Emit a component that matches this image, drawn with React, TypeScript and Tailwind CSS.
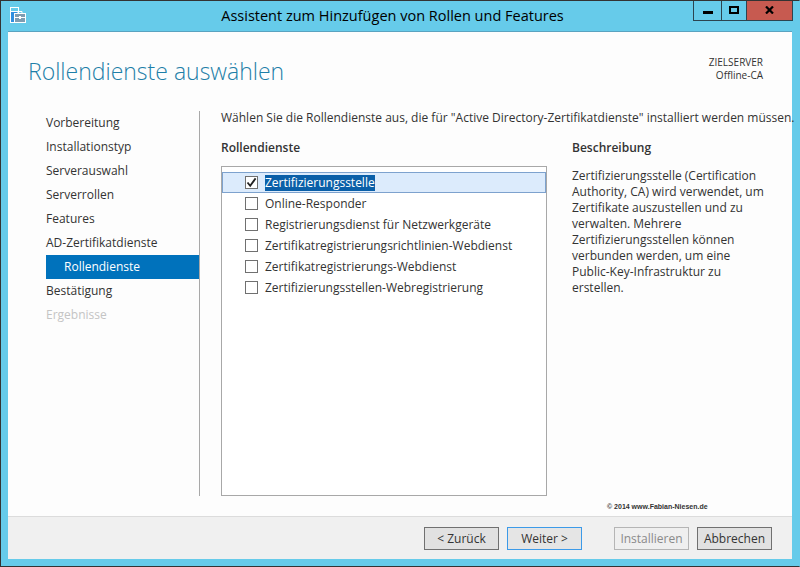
const F = "[font-family:'Open_Sans','Noto_Sans',sans-serif]";

function Box({ checked = false }: { checked?: boolean }) {
  return (
    <span className="flex h-[13px] w-[13px] shrink-0 items-center justify-center border border-[#707070] bg-white">
      {checked && (
        <svg width="11" height="11" viewBox="0 0 11 11">
          <path d="M1.5 5.5 L4.2 8.8 L9.6 1.4" fill="none" stroke="#222" strokeWidth="1.8" />
        </svg>
      )}
    </span>
  );
}

function WinIcon() {
  return (
    <svg width="16" height="16" viewBox="0 0 16 16">
      <rect x="0.5" y="0.5" width="8" height="15" fill="#2f8fe0" stroke="#fff" />
      <rect x="1" y="1" width="7" height="3" fill="#66cbea" />
      <rect x="1" y="4" width="7" height="1" fill="#fff" />
      <rect x="4.5" y="6.5" width="11" height="9" fill="#7e9db2" stroke="#fff" />
      <path d="M8 6.5 V4.5 H12 V6.5" fill="none" stroke="#fff" />
      <rect x="5" y="10" width="10" height="1" fill="#fff" />
      <rect x="9" y="9" width="2" height="3" fill="#fff" />
    </svg>
  );
}

const steps = ["Vorbereitung", "Installationstyp", "Serverauswahl", "Serverrollen", "Features", "AD-Zertifikatdienste"];
const rows = [
  "Online-Responder",
  "Registrierungsdienst für Netzwerkgeräte",
  "Zertifikatregistrierungsrichtlinien-Webdienst",
  "Zertifikatregistrierungs-Webdienst",
  "Zertifizierungsstellen-Webregistrierung",
];

function Btn({ label, cls }: { label: string; cls: string }) {
  return (
    <div className={`flex h-[23px] w-[75px] items-center justify-center border text-[12px] ${cls}`}>{label}</div>
  );
}

export default function App() {
  return (
    <div className={`flex h-[567px] w-[800px] flex-col overflow-hidden border-[1px] border-b-[#333] border-l-[#333] border-r-[#66cbea] border-t-[#333] bg-[#66cbea] text-[12px] leading-[16px] text-[#333] ${F}`}>
      <div className="flex h-[30px] shrink-0 items-start">
        <div className="ml-[9px] mt-[6px]"><WinIcon /></div>
        <div className="flex h-[30px] flex-1 items-center justify-center pl-[66px] font-['Open_Sans'] text-[14.5px] text-black">
          Assistent zum Hinzufügen von Rollen und Features
        </div>
        <div className="mr-[6px] flex h-[21px] -mt-px border-x border-b border-[#2c4450]">
          <div className="flex w-[28px] items-center justify-center border-r border-[#2c4450]"><span className="mt-[5px] h-[3px] w-[10px] bg-black" /></div>
          <div className="flex w-[25px] items-center justify-center border-r border-[#2c4450]"><span className="mb-[1px] h-[8px] w-[10px] border-2 border-black" /></div>
          <div className="flex w-[45px] items-center justify-center bg-[#c75a50]">
            <svg width="9" height="8" viewBox="0 0 9 8"><path d="M1 0.5 L8 7.5 M8 0.5 L1 7.5" stroke="#000" strokeWidth="2.2" /></svg>
          </div>
        </div>
      </div>

      <div className="mx-[7px] mb-[7px] flex min-h-0 flex-1 flex-col border-t border-[#5aa3c0] bg-[#fdfdfd]">
        <div className="flex h-[79px] shrink-0 items-start justify-between pl-[20px] pr-[29px]">
          <div className="mt-[21px] text-[23px] font-light leading-[36px] text-[#1e7fa8]">Rollendienste auswählen</div>
          <div className="mt-[24px] text-right text-[10px] leading-[13px]">
            <div>ZIELSERVER</div>
            <div>Offline-CA</div>
          </div>
        </div>

        <div className="flex min-h-0 flex-1">
          <div className="ml-[38px] h-[385px] w-[154px] border-r border-[#a8a8a8]">
            {steps.map((s) => (
              <div key={s} className="flex h-[24px] w-[153px] items-center">{s}</div>
            ))}
            <div className="flex h-[24px] w-[153px] items-center bg-[#0072bc] pl-[18px] text-white">Rollendienste</div>
            <div className="flex h-[24px] w-[153px] items-center">Bestätigung</div>
            <div className="flex h-[24px] w-[153px] items-center text-[#c4c4c4]">Ergebnisse</div>
          </div>

          <div className="ml-[21px] flex flex-1 flex-col">
            <div className="mt-[-1px] h-[16px] whitespace-nowrap">Wählen Sie die Rollendienste aus, die für "Active Directory-Zertifikatdienste" installiert werden müssen.</div>
            <div className="mt-[14px] flex">
              <div className="w-[326px]">
                <div className="h-[16px] font-semibold">Rollendienste</div>
                <div className="mt-[10px] h-[330px] border border-[#a8a8a8] bg-white pt-[5px]">
                  <div className="flex h-[21px] items-center border border-[#7da2ce] bg-[#dcebfc] pl-[22px]">
                    <Box checked />
                    <span className="ml-[7px] bg-[#0a5fa8] text-white">Zertifizierungsstelle</span>
                  </div>
                  {rows.map((r) => (
                    <div key={r} className="flex h-[21px] items-center pl-[23px]">
                      <Box />
                      <span className="ml-[7px]">{r}</span>
                    </div>
                  ))}
                </div>
              </div>
              <div className="ml-[25px] w-[195px]">
                <div className="h-[16px] font-semibold">Beschreibung</div>
                <p className="mt-[12px]">
                  Zertifizierungsstelle (Certification Authority, CA) wird verwendet, um Zertifikate auszustellen und zu verwalten. Mehrere Zertifizierungsstellen können verbunden werden, um eine Public-Key-Infrastruktur zu erstellen.
                </p>
              </div>
            </div>
            <div className="mt-[6px] ml-[386px] font-['Liberation_Sans'] text-[7px] font-bold leading-[10px] whitespace-nowrap">© 2014 www.Fabian-Niesen.de</div>
          </div>
        </div>

        <div className="flex h-[43px] shrink-0 items-start border-t border-[#dcdcdc] bg-[#f0f0f0] pl-[416px] pt-[10px]">
          <Btn label="< Zurück" cls="border-[#707070] bg-[#e1e1e1]" />
          <div className="ml-[8px]"><Btn label="Weiter >" cls="border-[#3c9ae8] bg-[#e5e5e5]" /></div>
          <div className="ml-[32px]"><Btn label="Installieren" cls="border-[#b5b5b5] bg-[#efefef] text-[#8a8a8a]" /></div>
          <div className="ml-[8px]"><Btn label="Abbrechen" cls="border-[#707070] bg-[#e1e1e1]" /></div>
        </div>
      </div>
    </div>
  );
}
